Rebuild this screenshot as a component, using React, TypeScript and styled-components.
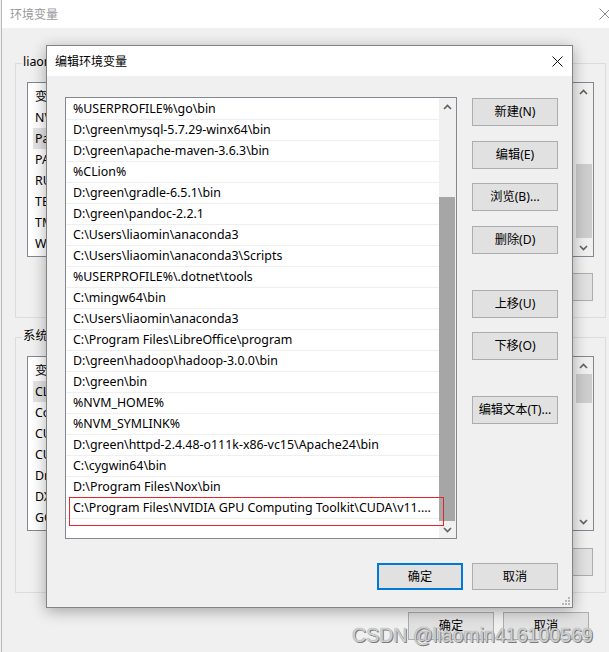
import React from 'react';
import styled, { createGlobalStyle } from 'styled-components';

const UI_FONT = `"Noto Sans", "Noto Sans CJK SC", sans-serif`;

const Global = createGlobalStyle`
  html, body { margin: 0; padding: 0; background: #f0f0f0; overflow: hidden; }
  body { font-family: ${UI_FONT}; font-size: 12px; color: #000; }
  * { box-sizing: border-box; }
`;

const Desktop = styled.div`
  position: relative;
  width: 609px;
  height: 652px;
  overflow: hidden;
  background: #f0f0f0;
`;

/* ---------- background window: 环境变量 ---------- */

const Window = styled.div`
  width: 620px;
  height: 652px;
  margin-left: 1px;
  border-left: 1px solid #b9b9b9;
  display: flex;
  flex-direction: column;
  background: #f0f0f0;
`;

const TitleBar = styled.div<{ $h: number; $pad: number; $color: string }>`
  height: ${p => p.$h}px;
  flex: none;
  background: #fff;
  display: flex;
  align-items: center;
  justify-content: space-between;
  padding-left: ${p => p.$pad}px;
  color: ${p => p.$color};
  font-family: "Noto Sans CJK SC", sans-serif;
  font-size: 12px;
  line-height: 16px;
`;

const CloseBox = styled.div<{ $mr: number }>`
  display: flex;
  margin-right: ${p => p.$mr}px;
`;

const WindowBody = styled.div`
  flex: 1;
  display: flex;
  flex-direction: column;
  padding: 35px 15px 0 13px;
`;

const GroupBox = styled.div<{ $mt: number }>`
  position: relative;
  margin-top: ${p => p.$mt}px;
  border: 1px solid #dcdcdc;
  padding: 18px 11px 16px;
  display: flex;
  flex-direction: column;
`;

const Legend = styled.div`
  position: absolute;
  top: -10px;
  left: 6px;
  padding: 0 1px;
  background: #f0f0f0;
  line-height: 16px;
  font-size: 12.4px;
  white-space: nowrap;
`;

const BgList = styled.div`
  height: 175px;
  border: 1px solid #828790;
  background: #fff;
  display: flex;
`;

const BgRows = styled.div`
  flex: 1;
  padding: 1px 0 0 5px;
  overflow: hidden;
  font-size: 12.4px;
`;

const BgHeaderRow = styled.div`
  height: 23px;
  display: grid;
  grid-template-columns: 160px 1fr;
  align-items: center;
  padding-left: 2px;
  white-space: nowrap;
`;

const BgRow = styled.div<{ $selected?: boolean }>`
  height: 21px;
  display: grid;
  grid-template-columns: 160px 1fr;
  align-items: center;
  padding-left: 2px;
  white-space: nowrap;
  background: ${p => (p.$selected ? '#e3e3e3' : 'transparent')};
`;

const BgScroll = styled.div`
  width: 20px;
  flex: none;
  background: #f0f0f0;
  display: flex;
  flex-direction: column;
`;

const ArrowCell = styled.div`
  height: 17px;
  flex: none;
  display: flex;
  align-items: center;
  justify-content: center;
`;

const Track = styled.div`
  flex: 1;
  display: flex;
  flex-direction: column;
`;

const Thumb = styled.div<{ $top: number; $h: number; $color: string; $ml: number; $mr: number }>`
  margin: ${p => p.$top}px ${p => p.$mr}px 0 ${p => p.$ml}px;
  height: ${p => p.$h}px;
  background: ${p => p.$color};
`;

const BgButtonRow = styled.div<{ $mt: number }>`
  margin-top: ${p => p.$mt}px;
  display: flex;
  justify-content: flex-end;
  gap: 9px;
  padding-right: 1px;
`;

const Button = styled.button<{ $w?: number; $h?: number; $primary?: boolean; $mt?: number }>`
  width: ${p => p.$w ?? 86}px;
  height: ${p => p.$h ?? 28}px;
  margin-top: ${p => p.$mt ?? 0}px;
  flex: none;
  padding: 0;
  background: #e1e1e1;
  border: ${p => (p.$primary ? '2px solid #0078d7' : '1px solid #adadad')};
  font-family: ${UI_FONT};
  font-size: 12.2px;
  line-height: 16px;
  color: #000;
  white-space: nowrap;
`;

const FooterRow = styled.div`
  margin-top: 19px;
  display: flex;
  justify-content: flex-end;
  gap: 9px;
  padding-right: 17px;
`;

/* ---------- dialog: 编辑环境变量 ---------- */

const Dialog = styled.div`
  position: absolute;
  left: 46px;
  top: 45px;
  width: 527px;
  height: 563px;
  border: 1px solid #838383;
  background: #f0f0f0;
  display: flex;
  flex-direction: column;
  box-shadow: 0 3px 14px rgba(0, 0, 0, 0.32);
`;

const DialogBody = styled.div`
  flex: 1;
  display: grid;
  grid-template-columns: 392px 86px;
  grid-template-rows: 442px auto;
  column-gap: 15px;
  padding: 21px 14px 0 18px;
`;

const ListPanel = styled.div`
  position: relative;
  border: 1px solid #828790;
  background: #fff;
  display: flex;
  overflow: hidden;
`;

const PathRows = styled.div`
  flex: 1;
  padding-top: 1px;
  overflow: hidden;
`;

const PathRow = styled.div`
  height: 21px;
  border-bottom: 1px solid #efefef;
  padding-left: 7px;
  font-size: 12.4px;
  line-height: 20px;
  white-space: nowrap;
  overflow: hidden;
`;

const DlgScroll = styled.div`
  width: 17px;
  flex: none;
  background: #f0f0f0;
  display: flex;
  flex-direction: column;
`;

const Highlight = styled.div`
  position: absolute;
  left: 3px;
  top: 399px;
  width: 375px;
  height: 29px;
  box-shadow: inset 0 0 0 1px #e8232b;
  pointer-events: none;
`;

const SideButtons = styled.div`
  display: flex;
  flex-direction: column;
  padding-top: 1px;
`;

const DialogFooter = styled.div`
  grid-column: 1 / 3;
  margin-top: 24px;
  display: flex;
  justify-content: flex-end;
  gap: 9px;
`;

const Grip = styled.div`
  position: absolute;
  right: 1px;
  bottom: 1px;
  display: flex;
`;

const Watermark = styled.div`
  position: absolute;
  left: 352px;
  top: 625px;
  font-family: "Liberation Sans", Arial, sans-serif;
  font-size: 19.6px;
  line-height: 20px;
  color: #cfcfcf;
  white-space: nowrap;
  text-shadow: 1px 1px 0 #7c7c7c, 0 0 1px #8a8a8a;
`;

/* ---------- drawings ---------- */

const Chevron = ({ dir, color = '#606060' }: { dir: 'up' | 'down'; color?: string }) => (
  <svg width="9" height="6" viewBox="0 0 9 6">
    <path
      d={dir === 'up' ? 'M1 5 L4.5 1.5 L8 5' : 'M1 1 L4.5 4.5 L8 1'}
      fill="none"
      stroke={color}
      strokeWidth="1.6"
    />
  </svg>
);

const CloseIcon = ({ color, size }: { color: string; size: number }) => (
  <svg width={size} height={size} viewBox={`0 0 ${size} ${size}`}>
    <path
      d={`M0.5 0.5 L${size - 0.5} ${size - 0.5} M${size - 0.5} 0.5 L0.5 ${size - 0.5}`}
      stroke={color}
      strokeWidth="1"
      fill="none"
    />
  </svg>
);

const GripDots = () => (
  <svg width="10" height="10" viewBox="0 0 10 10">
    {[
      [7, 1],
      [4, 4],
      [7, 4],
      [1, 7],
      [4, 7],
      [7, 7],
    ].map(([x, y], i) => (
      <rect key={i} x={x} y={y} width="2" height="2" fill="#b7b7b7" />
    ))}
  </svg>
);

/* ---------- data ---------- */

const userVars: [string, string][] = [
  ['NVM_HOME', 'D:\\green\\nvm'],
  ['Path', '%USERPROFILE%\\go\\bin;D:\\green\\mysql-5.7.29-winx64\\bin'],
  ['PATHEXT', '.COM;.EXE;.BAT;.CMD'],
  ['RUSTUP_HOME', 'D:\\green\\rustup'],
  ['TEMP', '%USERPROFILE%\\AppData\\Local\\Temp'],
  ['TMP', '%USERPROFILE%\\AppData\\Local\\Temp'],
  ['WSLENV', 'PATH/l'],
];

const systemVars: [string, string][] = [
  ['CLASSPATH', '.;%JAVA_HOME%\\lib'],
  ['ComSpec', 'C:\\Windows\\system32\\cmd.exe'],
  ['CUDA_PATH', 'C:\\Program Files\\NVIDIA GPU Computing Toolkit\\CUDA\\v11.0'],
  ['CUDA_PATH_V11_0', 'C:\\Program Files\\NVIDIA GPU Computing Toolkit\\CUDA\\v11.0'],
  ['DriverData', 'C:\\Windows\\System32\\Drivers\\DriverData'],
  ['DXSDK_DIR', 'C:\\Program Files (x86)\\Microsoft DirectX SDK\\'],
  ['GOPATH', 'D:\\green\\go'],
];

const paths: string[] = [
  '%USERPROFILE%\\go\\bin',
  'D:\\green\\mysql-5.7.29-winx64\\bin',
  'D:\\green\\apache-maven-3.6.3\\bin',
  '%CLion%',
  'D:\\green\\gradle-6.5.1\\bin',
  'D:\\green\\pandoc-2.2.1',
  'C:\\Users\\liaomin\\anaconda3',
  'C:\\Users\\liaomin\\anaconda3\\Scripts',
  '%USERPROFILE%\\.dotnet\\tools',
  'C:\\mingw64\\bin',
  'C:\\Users\\liaomin\\anaconda3',
  'C:\\Program Files\\LibreOffice\\program',
  'D:\\green\\hadoop\\hadoop-3.0.0\\bin',
  'D:\\green\\bin',
  '%NVM_HOME%',
  '%NVM_SYMLINK%',
  'D:\\green\\httpd-2.4.48-o111k-x86-vc15\\Apache24\\bin',
  'C:\\cygwin64\\bin',
  'D:\\Program Files\\Nox\\bin',
  'C:\\Program Files\\NVIDIA GPU Computing Toolkit\\CUDA\\v11....',
];

const sideButtons: { label: string; mt: number }[] = [
  { label: '新建(N)', mt: 0 },
  { label: '编辑(E)', mt: 15 },
  { label: '浏览(B)...', mt: 14 },
  { label: '删除(D)', mt: 15 },
  { label: '上移(U)', mt: 36 },
  { label: '下移(O)', mt: 14 },
  { label: '编辑文本(T)...', mt: 36 },
];

/* ---------- pieces ---------- */

const VarGroup = ({
  title,
  vars,
  selected,
  mt,
  btnMt,
  thumbTop,
  thumbH,
}: {
  title: string;
  vars: [string, string][];
  selected: number;
  mt: number;
  btnMt: number;
  thumbTop: number;
  thumbH: number;
}) => (
  <GroupBox $mt={mt}>
    <Legend>{title}</Legend>
    <BgList>
      <BgRows>
        <BgHeaderRow>
          <span>变量</span>
          <span>值</span>
        </BgHeaderRow>
        {vars.map(([k, v], i) => (
          <BgRow key={k} $selected={i === selected}>
            <span>{k}</span>
            <span>{v}</span>
          </BgRow>
        ))}
      </BgRows>
      <BgScroll>
        <ArrowCell>
          <Chevron dir="up" />
        </ArrowCell>
        <Track>
          <Thumb $top={thumbTop} $h={thumbH} $color="#cdcdcd" $ml={3} $mr={1} />
        </Track>
        <ArrowCell>
          <Chevron dir="down" />
        </ArrowCell>
      </BgScroll>
    </BgList>
    <BgButtonRow $mt={btnMt}>
      <Button>新建(W)...</Button>
      <Button>编辑(I)...</Button>
      <Button>删除(L)</Button>
    </BgButtonRow>
  </GroupBox>
);

export default function App() {
  return (
    <Desktop>
      <Global />
      <Window>
        <TitleBar $h={28} $pad={8} $color="#999999">
          <span>环境变量</span>
          <CloseBox $mr={10}>
            <CloseIcon color="#8a8a8a" size={12} />
          </CloseBox>
        </TitleBar>
        <WindowBody>
          <VarGroup
            title="liaomin 的用户变量(U)"
            vars={userVars}
            selected={1}
            mt={0}
            btnMt={16}
            thumbTop={64}
            thumbH={74}
          />
          <VarGroup
            title="系统变量(S)"
            vars={systemVars}
            selected={0}
            mt={19}
            btnMt={17}
            thumbTop={0}
            thumbH={29}
          />
          <FooterRow>
            <Button $w={86}>确定</Button>
            <Button $w={86}>取消</Button>
          </FooterRow>
        </WindowBody>
      </Window>

      <Dialog>
        <TitleBar $h={30} $pad={8} $color="#000">
          <span>编辑环境变量</span>
          <CloseBox $mr={9}>
            <CloseIcon color="#111" size={11} />
          </CloseBox>
        </TitleBar>
        <DialogBody>
          <ListPanel>
            <PathRows>
              {paths.map((p, i) => (
                <PathRow key={i}>{p}</PathRow>
              ))}
            </PathRows>
            <DlgScroll>
              <ArrowCell>
                <Chevron dir="up" />
              </ArrowCell>
              <Track>
                <Thumb $top={82} $h={324} $color="#a6a6a6" $ml={0} $mr={1} />
              </Track>
              <ArrowCell>
                <Chevron dir="down" />
              </ArrowCell>
            </DlgScroll>
            <Highlight />
          </ListPanel>
          <SideButtons>
            {sideButtons.map(b => (
              <Button key={b.label} $mt={b.mt}>
                {b.label}
              </Button>
            ))}
          </SideButtons>
          <DialogFooter>
            <Button $h={27} $primary>
              确定
            </Button>
            <Button $h={27}>取消</Button>
          </DialogFooter>
        </DialogBody>
        <Grip>
          <GripDots />
        </Grip>
      </Dialog>

      <Watermark>CSDN @liaomin416100569</Watermark>
    </Desktop>
  );
}
